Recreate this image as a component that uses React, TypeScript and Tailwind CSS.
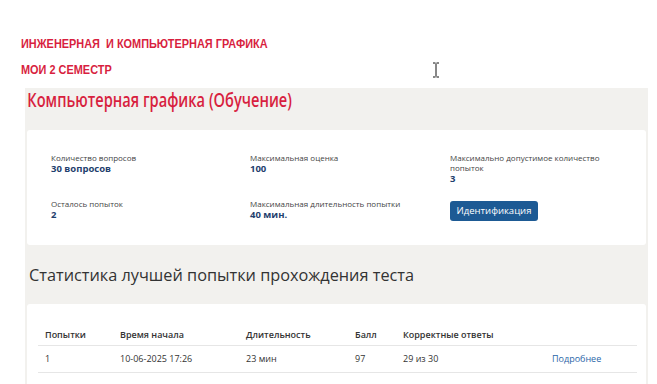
import React from 'react';

const info = [
  { label: 'Количество вопросов', value: '30 вопросов' },
  { label: 'Максимальная оценка', value: '100' },
  { label: 'Максимально допустимое количество попыток', value: '3' },
  { label: 'Осталось попыток', value: '2' },
  { label: 'Максимальная длительность попытки', value: '40 мин.' },
];

const attempts = [
  { n: '1', start: '10-06-2025 17:26', dur: '23 мин', score: '97', correct: '29 из 30' },
];

const InfoItem: React.FC<{ label: string; value: string }> = ({ label, value }) => (
  <div className="pr-[40px]">
    <div className="text-[8px] leading-[10px] text-[#444]">{label}</div>
    <div className="text-[9.5px] leading-[11px] font-bold text-[#1f3f6e]">{value}</div>
  </div>
);

export default function App() {
  return (
    <div
      className="relative w-[657px] h-[384px] overflow-hidden bg-white"
      style={{ fontFamily: '"Open Sans", "Noto Sans", sans-serif' }}
    >
      {/* Header */}
      <div
        className="pl-[21px] pt-[36px] text-[#d81f3f] font-bold text-[13px] leading-[16px]"
        style={{ fontFamily: '"Liberation Sans", Arial, sans-serif' }}
      >
        <div className="whitespace-pre origin-left scale-x-[0.84]">ИНЖЕНЕРНАЯ  И КОМПЬЮТЕРНАЯ ГРАФИКА</div>
        <div className="mt-[10px] origin-left scale-x-[0.84]">МОИ 2 СЕМЕСТР</div>
      </div>

      {/* text cursor */}
      <svg className="absolute left-[432px] top-[62px]" width="8" height="16" viewBox="0 0 8 16">
        <path d="M1 1h2.5M4.5 1H7M4 1.5v13M1 15h2.5M4.5 15H7" stroke="#111" strokeWidth="1" fill="none" />
      </svg>

      {/* Content panel */}
      <div className="ml-[25px] mt-[10px] w-[623px] h-[300px] bg-[#f2f1ee] pt-[1px]">
        <h1 className="pl-[3px] text-[19px] leading-[22px] font-semibold text-[#d81f3f] origin-left scale-x-[0.77] whitespace-nowrap">
          Компьютерная графика (Обучение)
        </h1>

        <div className="mx-[2px] mt-[19px] h-[115px] bg-white rounded-[3px] pl-[24px] pt-[23px]">
          <div className="grid grid-cols-[199px_200px_190px] gap-y-[15px]">
            <InfoItem {...info[0]} />
            <InfoItem {...info[1]} />
            <InfoItem {...info[2]} />
            <InfoItem {...info[3]} />
            <InfoItem {...info[4]} />
            <div className="-mt-[3px]">
              <button className="w-[88px] h-[20px] rounded-[3px] bg-[#1d5a94] text-white text-[9.5px]">
                Идентификация
              </button>
            </div>
          </div>
        </div>

        <h2 className="pl-[4px] mt-[19px] text-[16.3px] leading-[22px] text-[#333]">
          Статистика лучшей попытки прохождения теста
        </h2>

        <div className="mx-[2px] mt-[18px] h-[120px] bg-white rounded-[3px] pl-[11px] pr-[9px] pt-[20px]">
          <table className="w-full text-[9px] text-[#333] border-collapse">
            <thead>
              <tr className="border-b border-[#e6e6e6] h-[21px] text-left">
                <th className="pl-[7px] w-[82px] font-semibold">Попытки</th>
                <th className="w-[126px] font-semibold">Время начала</th>
                <th className="w-[109px] font-semibold">Длительность</th>
                <th className="w-[48px] font-semibold">Балл</th>
                <th className="w-[149px] font-semibold">Корректные ответы</th>
                <th></th>
              </tr>
            </thead>
            <tbody>
              {attempts.map((a) => (
                <tr key={a.n} className="border-b border-[#e6e6e6] h-[27px]">
                  <td className="pl-[7px]">{a.n}</td>
                  <td>{a.start}</td>
                  <td>{a.dur}</td>
                  <td>{a.score}</td>
                  <td>{a.correct}</td>
                  <td className="text-[#2a66a8]">Подробнее</td>
                </tr>
              ))}
            </tbody>
          </table>
        </div>
      </div>
    </div>
  );
}
